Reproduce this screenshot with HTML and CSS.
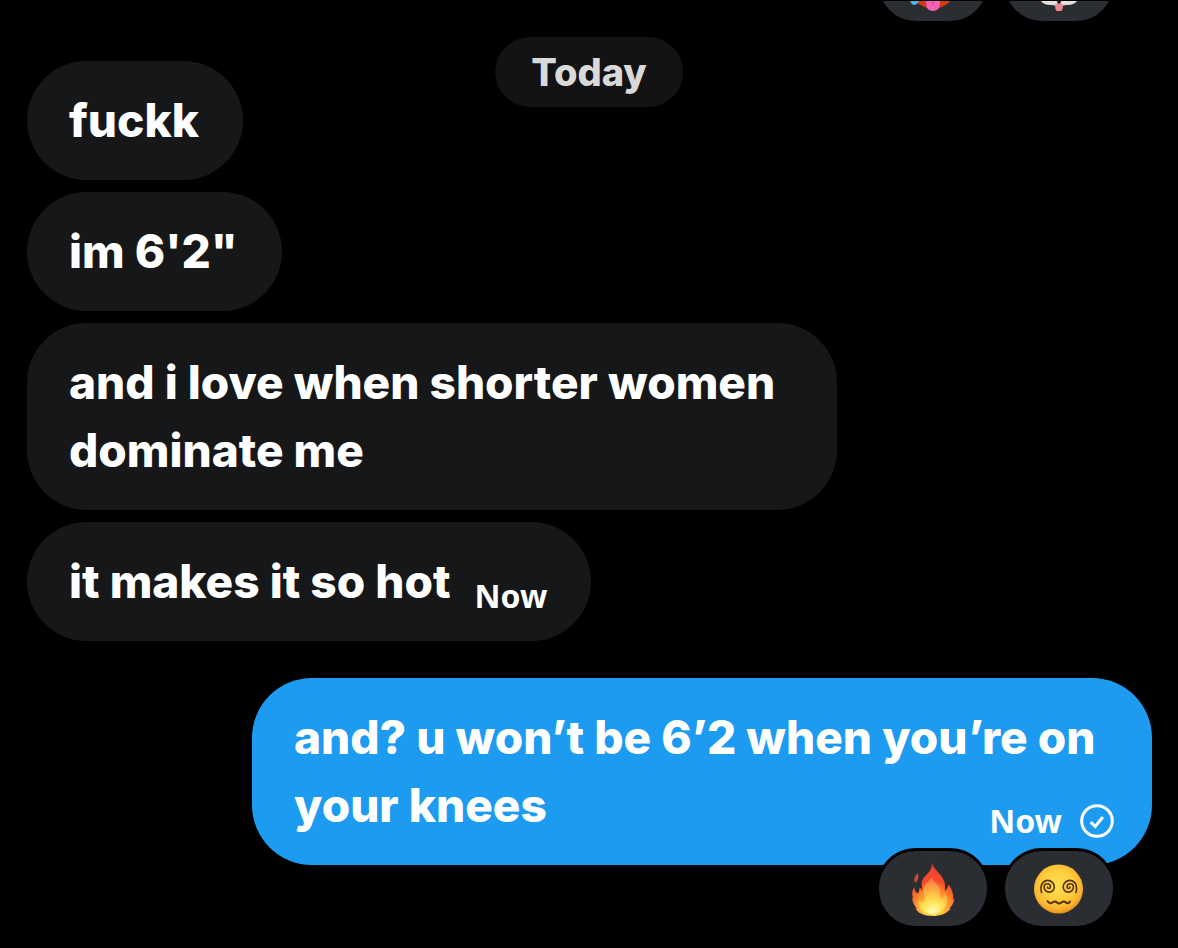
FILE: index.html
```html
<!DOCTYPE html>
<html lang="en">
<head>
<meta charset="utf-8">
<meta name="viewport" content="width=device-width, initial-scale=1">
<title>Messages</title>
<link rel="stylesheet" href="styles.css">
</head>
<body>
<main class="chat">
  <div class="day">Today</div>

  <div class="reactions reactions-earlier">
    <button class="reaction" type="button" aria-label="Hot face">
      <svg class="emoji" viewBox="0 0 54 54" aria-hidden="true">
        <defs>
          <linearGradient id="hot" x1="0" y1="0" x2="0" y2="1">
            <stop offset="0" stop-color="#ff7a2a"/><stop offset="1" stop-color="#c93410"/>
          </linearGradient>
        </defs>
        <circle cx="27" cy="27" r="24.5" fill="url(#hot)"/>
        <path d="M19 41Q27 38 35 41L33 45H21Z" fill="#6b1409"/>
        <path d="M20 38H34V46Q34 54 27 54T20 46Z" fill="#f562b4"/>
        <path d="M27 41V48" stroke="#e04a9a" stroke-width="1.5"/>
        <path d="M9 35Q3 43 5 46Q8 50 12 46Q14 42 9 35Z" fill="#4bb4ea"/>
      </svg>
    </button>
    <button class="reaction" type="button" aria-label="Dog face">
      <svg class="emoji" viewBox="0 0 54 54" aria-hidden="true">
        <ellipse cx="27" cy="28" rx="22" ry="21" fill="#cfc8c3"/>
        <ellipse cx="18" cy="41" rx="10" ry="7" fill="#e6e1dd"/>
        <ellipse cx="36" cy="41" rx="10" ry="7" fill="#e6e1dd"/>
        <path d="M24 42H30L28 47H26Z" fill="#28181b"/>
        <path d="M23 48Q27 45 31 48Q31 55 27 55T23 48Z" fill="#ee8792"/>
      </svg>
    </button>
  </div>

  <section class="group">
    <p class="bubble received">fuckk</p>
    <p class="bubble received">im 6'2"</p>
    <p class="bubble received">and i love when shorter women dominate me</p>
    <div class="bubble received last">
      <p class="text">it makes it so hot</p>
      <time class="meta">Now</time>
    </div>
  </section>

  <section class="group">
    <p class="bubble sent">
      and? u won’t be 6’2 when you’re on your knees
      <span class="meta">
        <time>Now</time>
        <svg class="check" viewBox="0 0 34 34" role="img" aria-label="Sent">
          <circle cx="17" cy="17" r="15.3"/>
          <path d="M10.7 18.2L15.2 22.5L22.8 13"/>
        </svg>
      </span>
    </p>
    <div class="reactions">
      <button class="reaction" type="button" aria-label="Fire">
        <svg class="emoji" viewBox="0 0 54 54" aria-hidden="true">
          <defs>
            <radialGradient id="flame" gradientUnits="userSpaceOnUse" cx="27" cy="47" r="44">
              <stop offset="0" stop-color="#fff37a"/><stop offset=".22" stop-color="#ffc640"/>
              <stop offset=".42" stop-color="#ff8b2d"/><stop offset=".65" stop-color="#f5492b"/>
              <stop offset="1" stop-color="#e9452f"/>
            </radialGradient>
            <radialGradient id="core" gradientUnits="userSpaceOnUse" cx="27" cy="49" r="34">
              <stop offset="0" stop-color="#fffbb8"/><stop offset=".3" stop-color="#ffe253"/>
              <stop offset=".62" stop-color="#ffae3e"/><stop offset="1" stop-color="#ff7a50" stop-opacity=".7"/>
            </radialGradient>
          </defs>
          <path d="M26 1.5C28 8 36 12 38.500 20C39.600 24 38.500 27 39 29C41 27 42 25 42.500 22.500C46 27 48 33 47 38C48 37 48.500 36 48.500 35C48.500 40 46 44 43.500 46.500L44.500 47C40 52 34 54 27 54C18 54 11 50.500 9.500 46.500L11 47C8 43 6.500 40 6 35.500L7.500 37C5.500 32 6 28 8.500 25C8.500 29 10 30.500 12 31.500C14 29 13 27 13.500 25.500C15 26 15.500 28 16 29C17 25 14 22 17 17C19 13 26 10 26 1.500Z" fill="url(#flame)"/>
          <path d="M26 14C26 20 34 22 34 29C34 33 33 35 35 37C38 36 39 34 40 32C42 38 41 43 38 46C34 51 29 52 26 52C18 52 13 47 12 42L13 38C14 40 16 41 17 40C22 36 15 29 19 23C21 20 25 18 26 14Z" fill="url(#core)"/>
          <path d="M12 11C12.500 15 13 17 9.500 21C7.500 18 8 15 12 11Z" fill="#d94331"/>
        </svg>
      </button>
      <button class="reaction" type="button" aria-label="Face with spiral eyes">
        <svg class="emoji" viewBox="0 0 54 54" aria-hidden="true">
          <defs>
            <radialGradient id="face" cx=".48" cy=".42" r=".58">
              <stop offset="0" stop-color="#ffdf50"/><stop offset=".55" stop-color="#ffcd3c"/>
              <stop offset=".85" stop-color="#fab32e"/><stop offset="1" stop-color="#e88d1d"/>
            </radialGradient>
          </defs>
          <circle cx="26.5" cy="27" r="24.5" fill="url(#face)"/>
          <g fill="none" stroke="#553008" stroke-width="1.6" stroke-linecap="round">
            <path d="M15.500 25a1.500 1.500 0 0 0 3 0a3.200 3.200 0 0 0-6.400 0a5.100 5.100 0 0 0 10.200 0a6.600 6.600 0 0 0-13.200 0q-.5 3 .5 5.500"/>
            <path d="M38 25a1.500 1.500 0 0 1-3 0a3.200 3.200 0 0 1 6.400 0a5.100 5.100 0 0 1-10.200 0a6.600 6.600 0 0 1 13.200 0q.5 3-.5 5.500"/>
            <path d="M15.500 39Q18 42.500 20.500 40.500T25 40.500T29.500 40.500T34 40.500T38 39.500" stroke-width="2"/>
          </g>
        </svg>
      </button>
    </div>
  </section>
</main>
</body>
</html>
```

FILE: styles.css
```css
* { box-sizing: border-box; }

body {
  margin: 0;
  background: #000;
  color: #fff;
  font-family: Inter, "Liberation Sans", sans-serif;
  font-weight: 800;
}

p { margin: 0; }

.chat {
  position: relative;
  min-height: 100vh;
  border-top: 1px solid #000;
  padding: 0 26px 19px 27px;
  overflow: clip;
}

.day {
  position: absolute;
  top: 36px;
  left: 50%;
  transform: translateX(-50%);
  padding: 0 36px;
  border-radius: 35px;
  background: #131313;
  color: #d9d9d9;
  font-size: 38px;
  line-height: 70px;
}

.group {
  display: flex;
  flex-direction: column;
  align-items: flex-start;
  gap: 12px;
  margin-top: 37px;
}

.bubble {
  padding: 25px 44px 26px 42px;
  border-radius: 60px;
  font-size: 46px;
  line-height: 68px;
}

.received {
  max-width: 72%;
  background: #161719;
}

.last {
  display: flex;
  align-items: flex-end;
  gap: 24px;
}

.meta {
  display: flex;
  align-items: center;
  gap: 18px;
  margin-bottom: 2px;
  font-family: "Noto Sans", "Open Sans", sans-serif;
  font-size: 32px;
  font-weight: 700;
  line-height: 34px;
}

.sent {
  align-self: flex-end;
  max-width: 80%;
  padding-right: 38px;
  background: #1d9bf0;
}

.sent .meta {
  float: right;
  margin: 33px 0 0;
}

.check {
  width: 34px;
  height: 34px;
  fill: none;
  stroke: #fff;
  stroke-width: 3;
}

.reactions {
  display: flex;
  align-self: flex-end;
  justify-content: flex-end;
  gap: 12px;
  margin: -29px 36px 0 0;
}

.reactions-earlier { margin-top: -58px; }

.reaction {
  display: grid;
  place-items: center;
  width: 114px;
  height: 81px;
  padding: 0;
  border: 3px solid #000;
  border-radius: 40px;
  background: #2a2e32;
}

.emoji {
  width: 54px;
  height: 54px;
}
```
